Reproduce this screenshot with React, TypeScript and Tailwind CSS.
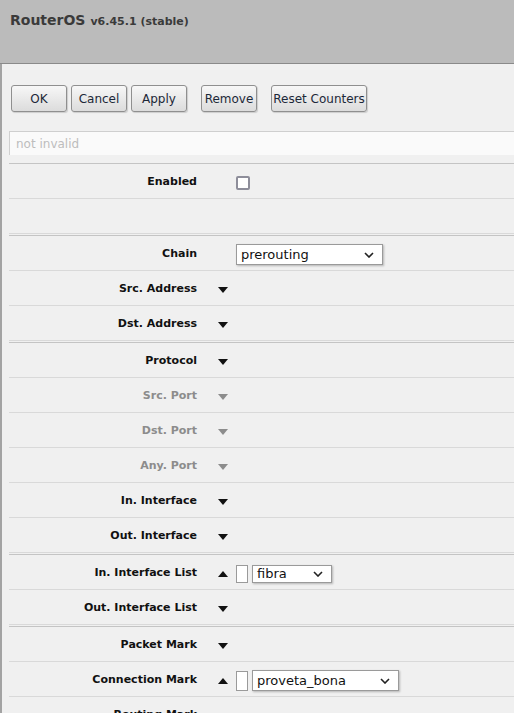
import React from 'react';

const font = { fontFamily: '"DejaVu Sans", Verdana, sans-serif' };

function Tri({ up = false, dim = false }: { up?: boolean; dim?: boolean }) {
  return (
    <svg width="10" height="6" viewBox="0 0 10 6" className="block">
      <polygon points={up ? '0,6 10,6 5,0' : '0,0 10,0 5,6'} fill={dim ? '#8c8c8c' : '#111'} />
    </svg>
  );
}

function Chevron() {
  return (
    <svg width="10" height="6" viewBox="0 0 10 6" className="block">
      <polyline points="1,1 5,5 9,1" fill="none" stroke="#222" strokeWidth="1.6" />
    </svg>
  );
}

function Select({ value, w, h = 'h-[21px]', text = 'text-[13px]' }: { value: string; w: string; h?: string; text?: string }) {
  return (
    <div className={`${w} ${h} ${text} flex items-center justify-between bg-white border border-[#9a9a9a] pl-[4px] pr-[8px] text-[#111] shadow-[1px_1px_2px_rgba(0,0,0,0.25)]`}>
      <span>{value}</span>
      <Chevron />
    </div>
  );
}

function Row({ label, dim = false, tri, children }: { label?: string; dim?: boolean; tri?: 'up' | 'down'; children?: React.ReactNode }) {
  return (
    <div className="h-[35px] pt-[3px] flex items-center border-b border-[#d9d9d9]">
      <div className={`w-[188px] text-right text-[11px] font-bold ${dim ? 'text-[#8c8c8c]' : 'text-[#111]'}`}>{label}</div>
      <div className="w-[39px] pl-[21px]">{tri && <Tri up={tri === 'up'} dim={dim} />}</div>
      <div className="flex items-center gap-[4px]">{children}</div>
    </div>
  );
}

function Section({ children, first = false }: { children: React.ReactNode; first?: boolean }) {
  return <div className={`${first ? 'mt-[8px]' : 'mt-[1px]'} border-t border-[#c4c4c4]`}>{children}</div>;
}

function Btn({ label, w = 'w-[56px]' }: { label: string; w?: string }) {
  return (
    <button className={`${w} h-[27px] rounded-[3px] border border-[#8f8f8f] bg-gradient-to-b from-[#f7f7f7] to-[#dcdcdc] text-[12px] text-[#1c2838] shadow-[1px_1px_1px_rgba(0,0,0,0.15)]`}>
      {label}
    </button>
  );
}

export default function App() {
  return (
    <div className="w-[514px] h-[713px] overflow-hidden bg-[#f0f0f0]" style={font}>
      <div className="h-[64px] bg-[#bbbbbb] border-b border-[#8a8a8a] pl-[10px] pt-[8px] text-[#3a3a3a] font-bold">
        <span className="text-[14px]">RouterOS</span>
        <span className="text-[11px] ml-[5px]">v6.45.1 (stable)</span>
      </div>

      <div className="border-l-2 border-[#a3a3a3] pl-[7px]">
        <div className="pt-[21px] pl-[2px] flex items-center">
          <div className="flex gap-[4px]">
            <Btn label="OK" />
            <Btn label="Cancel" />
            <Btn label="Apply" />
          </div>
          <div className="ml-[14px]">
            <Btn label="Remove" />
          </div>
          <div className="ml-[14px]">
            <Btn label="Reset Counters" w="w-[96px]" />
          </div>
        </div>

        <div className="mt-[19px] h-[24px] bg-[#fafafa] border-t border-l border-[#cfcfcf] pl-[6px] flex items-center text-[12px] text-[#bdbdbd]">
          not invalid
        </div>

        <Section first>
          <Row label="Enabled">
            <div className="w-[14px] h-[14px] bg-white border-2 border-[#8e8e9a] rounded-[2px]" />
          </Row>
          <Row />
        </Section>

        <Section>
          <Row label="Chain">
            <Select value="prerouting" w="w-[147px]" />
          </Row>
          <Row label="Src. Address" tri="down" />
          <Row label="Dst. Address" tri="down" />
        </Section>

        <Section>
          <Row label="Protocol" tri="down" />
          <Row label="Src. Port" tri="down" dim />
          <Row label="Dst. Port" tri="down" dim />
          <Row label="Any. Port" tri="down" dim />
          <Row label="In. Interface" tri="down" />
          <Row label="Out. Interface" tri="down" />
        </Section>

        <Section>
          <Row label="In. Interface List" tri="up">
            <div className="w-[12px] h-[18px] bg-white border border-[#9a9a9a]" />
            <Select value="fibra" w="w-[80px]" h="h-[18px]" />
          </Row>
          <Row label="Out. Interface List" tri="down" />
        </Section>

        <Section>
          <Row label="Packet Mark" tri="down" />
          <Row label="Connection Mark" tri="up">
            <div className="w-[12px] h-[20px] bg-white border border-[#9a9a9a]" />
            <Select value="proveta_bona" w="w-[147px]" />
          </Row>
          <Row label="Routing Mark" tri="down" />
        </Section>
      </div>
    </div>
  );
}
